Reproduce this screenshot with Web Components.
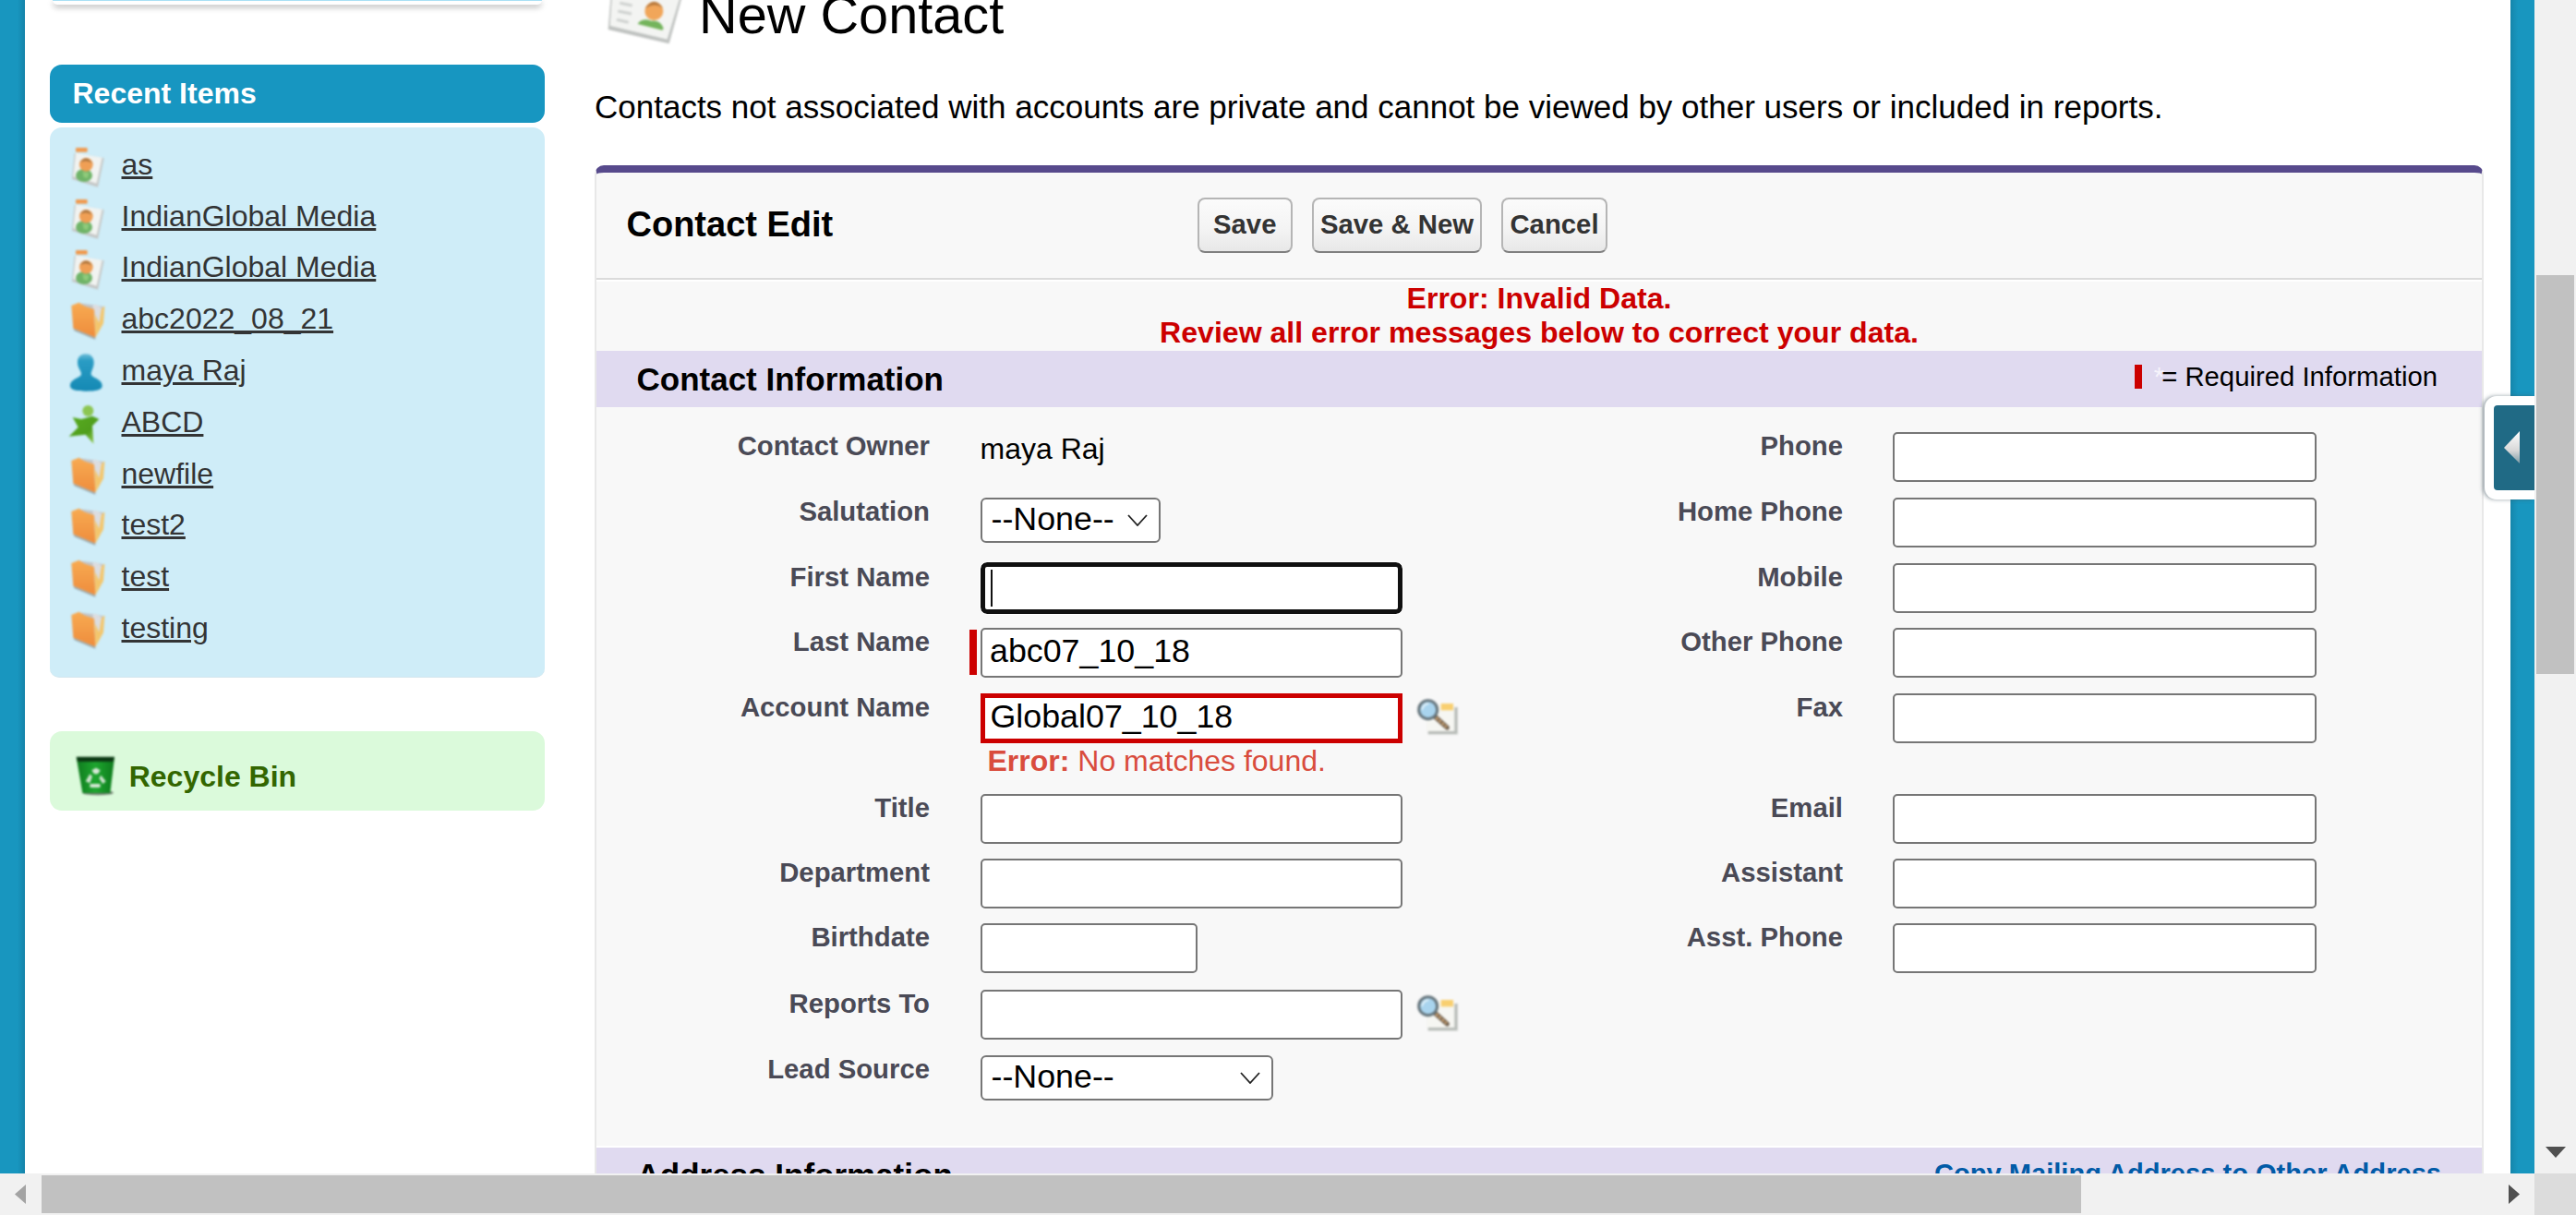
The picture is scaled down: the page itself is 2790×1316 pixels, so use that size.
<!DOCTYPE html>
<html>
<head>
<meta charset="utf-8">
<title>New Contact</title>
<style>
  html, body { margin: 0; padding: 0; height: 100%; overflow: hidden; background: #fff; }
  body { font-family: "Liberation Sans", Arial, sans-serif; }
</style>
</head>
<body>
<sf-app>
  <sf-sidebar slot="side">
    <sf-recent-items>
      <sf-recent-item icon="contact">as</sf-recent-item>
      <sf-recent-item icon="contact">IndianGlobal Media</sf-recent-item>
      <sf-recent-item icon="contact">IndianGlobal Media</sf-recent-item>
      <sf-recent-item icon="folder">abc2022_08_21</sf-recent-item>
      <sf-recent-item icon="user">maya Raj</sf-recent-item>
      <sf-recent-item icon="account">ABCD</sf-recent-item>
      <sf-recent-item icon="folder">newfile</sf-recent-item>
      <sf-recent-item icon="folder">test2</sf-recent-item>
      <sf-recent-item icon="folder">test</sf-recent-item>
      <sf-recent-item icon="folder">testing</sf-recent-item>
    </sf-recent-items>
    <sf-recycle-bin></sf-recycle-bin>
  </sf-sidebar>

  <sf-page-head slot="main"></sf-page-head>

  <sf-edit-card slot="main">
    <sf-section title="Contact Information" required>
      <sf-form-grid>
        <sf-field label="Contact Owner"><sf-text>maya Raj</sf-text></sf-field>
        <sf-field label="Phone" side="right"><sf-input width="459"></sf-input></sf-field>

        <sf-field label="Salutation"><sf-select width="195.5">--None--</sf-select></sf-field>
        <sf-field label="Home Phone" side="right"><sf-input width="459"></sf-input></sf-field>

        <sf-field label="First Name"><sf-input focused></sf-input></sf-field>
        <sf-field label="Mobile" side="right"><sf-input width="459"></sf-input></sf-field>

        <sf-field label="Last Name" required><sf-input>abc07_10_18</sf-input></sf-field>
        <sf-field label="Other Phone" side="right"><sf-input width="459"></sf-input></sf-field>

        <sf-field label="Account Name" lookup error="No matches found."><sf-input invalid>Global07_10_18</sf-input></sf-field>
        <sf-field label="Fax" side="right"><sf-input width="459"></sf-input></sf-field>

        <sf-field label="Title"><sf-input></sf-input></sf-field>
        <sf-field label="Email" side="right"><sf-input width="459"></sf-input></sf-field>

        <sf-field label="Department"><sf-input></sf-input></sf-field>
        <sf-field label="Assistant" side="right"><sf-input width="459"></sf-input></sf-field>

        <sf-field label="Birthdate"><sf-input width="235"></sf-input></sf-field>
        <sf-field label="Asst. Phone" side="right"><sf-input width="459"></sf-input></sf-field>

        <sf-field label="Reports To" lookup><sf-input></sf-input></sf-field>
        <div></div>

        <sf-field label="Lead Source"><sf-select width="317">--None--</sf-select></sf-field>
        <div></div>
      </sf-form-grid>
    </sf-section>
    <sf-section title="Address Information" link="Copy Mailing Address to Other Address"></sf-section>
  </sf-edit-card>
</sf-app>

<script>
const ICONS = {
  contact: `<svg viewBox="45 24 120 144" width="40" height="48">
      <rect x="66" y="30" width="38" height="14" rx="3" fill="#f09a50"/>
      <polygon points="62,48 158,64 138,158 54,132" fill="#c4c7c6"/>
      <polygon points="66,47 152,62 134,146 58,124" fill="#f1f3f1"/>
      <ellipse cx="93" cy="120" rx="27" ry="21" fill="#6fb468"/>
      <circle cx="100" cy="85" r="22" fill="#ef9f55"/>
      <path d="M80 78 Q100 50 120 80 Q100 66 80 78Z" fill="#a9743f"/>
      <path d="M88 108 L110 112 L104 130 L92 126Z" fill="#8fca7a"/>
    </svg>`,
  folder: `<svg viewBox="45 76 120 144" width="40" height="48">
      <defs><linearGradient id="fo" x1="0" y1="0" x2="0" y2="1"><stop offset="0" stop-color="#f8ab52"/><stop offset="1" stop-color="#ee8c3c"/></linearGradient></defs>
      <polygon points="128,108 160,96 156,152 130,198" fill="#f3c66d"/>
      <polygon points="74,86 122,92 156,98 134,126 100,110" fill="#c2c3c6"/>
      <polygon points="120,94 132,90 150,102 142,150 128,120" fill="#dcdde0"/>
      <polygon points="52,94 76,84 96,96 126,106 130,198 58,168" fill="url(#fo)"/>
      <polygon points="58,168 130,198 130,204 62,176" fill="#9aa6a8"/>
    </svg>`,
  user: `<svg viewBox="45 243 120 144" width="40" height="48">
      <defs><linearGradient id="us" x1="0" y1="0" x2="0" y2="1"><stop offset="0" stop-color="#6cbcd8"/><stop offset=".18" stop-color="#2a9cc4"/><stop offset="1" stop-color="#1489b4"/></linearGradient></defs>
      <path d="M72 278 C72 258 84 250 98 250 C114 250 125 260 125 278 C125 296 116 304 116 316 C116 328 152 330 152 354 C152 368 130 371 100 371 C70 371 48 368 48 354 C48 330 84 328 84 316 C84 304 72 296 72 278Z" fill="url(#us)"/>
    </svg>`,
  account: `<svg viewBox="45 411 120 144" width="40" height="48">
      <defs><linearGradient id="ac" x1="0" y1="0" x2="1" y2="1"><stop offset="0" stop-color="#58ac20"/><stop offset=".6" stop-color="#4f9e1c"/><stop offset="1" stop-color="#a6d860"/></linearGradient></defs>
      <circle cx="106" cy="435" r="18" fill="#8cc652"/>
      <path d="M56 456 L84 462 L120 452 L142 462 L120 484 L124 542 L98 512 L44 518 L74 488Z" fill="url(#ac)"/>
    </svg>`,
  bin: `<svg viewBox="60 105 140 145" width="46.7" height="48.3">
      <defs>
        <linearGradient id="bi" x1="0" y1="0" x2="1" y2="0"><stop offset="0" stop-color="#0f7a1e"/><stop offset=".5" stop-color="#1ea62f"/><stop offset="1" stop-color="#0d7a1c"/></linearGradient>
      </defs>
      <ellipse cx="138" cy="233" rx="50" ry="8" fill="#6e7a6e"/>
      <polygon points="68,118 192,118 178,234 88,234" fill="url(#bi)"/>
      <polygon points="68,116 192,116 188,132 72,132" fill="#0c3a14"/>
      <path d="M118 160 L132 152 L146 160 L138 172 L126 172Z" fill="#d7e8d7"/>
      <path d="M98 196 L112 172 L120 180 L112 202Z" fill="#cfe4cf"/>
      <path d="M148 176 L164 196 L154 204 L142 186Z" fill="#cfe4cf"/>
      <rect x="112" y="204" width="34" height="12" rx="4" fill="#d7e8d7"/>
    </svg>`,
  lookup: `<svg viewBox="90 40 150 135" width="50" height="45">
      <rect x="134" y="76" width="96" height="88" fill="#b8bcb8"/>
      <rect x="128" y="70" width="92" height="84" fill="#f6f6f2"/>
      <rect x="176" y="64" width="40" height="22" fill="#f8cf70"/>
      <path d="M158 108 L196 142" stroke="#6b5b4a" stroke-width="15" stroke-linecap="round"/>
      <path d="M160 110 L194 140" stroke="#e0b078" stroke-width="7" stroke-dasharray="8 5"/>
      <circle cx="134" cy="84" r="30" fill="#a9d4ee" stroke="#66757c" stroke-width="9"/>
      <path d="M114 84 Q118 66 136 64" stroke="#e4f3fb" stroke-width="6" fill="none"/>
    </svg>`,
  card: `<svg viewBox="30 0 300 150" width="100" height="50">
      <polygon points="66,-30 296,-10 254,142 56,96" fill="#bfc2c0"/>
      <polygon points="70,-30 290,-10 248,128 62,84" fill="#f3f4f2"/>
      <g stroke="#cfd2d0" stroke-width="9">
        <path d="M94 10 L134 18"/><path d="M88 36 L132 45"/><path d="M84 64 L122 73"/>
      </g>
      <path d="M156 72 Q170 58 196 68 Q226 64 236 92 L232 98 L152 78Z" fill="#74b45c"/>
      <circle cx="205" cy="36" r="30" fill="#f1a65a"/>
      <path d="M176 28 Q204 -16 234 26 Q206 6 176 28Z" fill="#b97a3c"/>
    </svg>`
};

class SfElement extends HTMLElement {
  constructor() {
    super();
    this.attachShadow({ mode: 'open' });
  }

  connectedCallback() {
    this.render();
  }
}

class SfApp extends SfElement {
  render() {
    this.shadowRoot.innerHTML = `
      <style>
        :host {
          display: grid;
          grid-template-columns: 2745px 45px;
          grid-template-rows: 1271px 45px;
          width: 2790px;
          height: 1316px;
          overflow: hidden;
          color: #000;
          font-family: "Liberation Sans", Arial, sans-serif;
        }
        .view {
          position: relative;
          display: flex;
          overflow: hidden;
          background: #fff;
        }
        .edge {
          flex: none;
          width: 27px;
          background: linear-gradient(90deg, #1896bf 0%, #1896bf 70%, #1583a9 100%);
        }
        .edge.right {
          margin-left: 29px;
          background: linear-gradient(90deg, #1586ab 0%, #1896bf 30%, #1896bf 100%);
        }
        .side {
          flex: none;
          width: 536px;
          margin: 0 54px 0 27px;
        }
        .main {
          flex: none;
          width: 2046px;
        }
        .tab {
          position: absolute;
          top: 429px;
          right: 0;
          box-sizing: border-box;
          display: flex;
          width: 54px;
          height: 112px;
          padding: 10px 0 10px 10px;
          background: #fff;
          border-radius: 13px 0 0 13px;
          box-shadow: -2px 0 4px rgba(70, 90, 100, 0.55);
        }
        .tab div {
          flex: 1;
          display: flex;
          align-items: center;
          padding-left: 10px;
          background: #206a85;
          border-radius: 4px 0 0 4px;
        }
        .vbar {
          position: relative;
          background: #f1f1f1;
        }
        .vbar .thumb {
          position: absolute;
          top: 298px;
          left: 2px;
          width: 41px;
          height: 432px;
          background: #c1c1c1;
        }
        .vbar svg {
          position: absolute;
          left: 12px;
          top: 1242px;
        }
        .hbar {
          position: relative;
          background: #f1f1f1;
        }
        .hbar .thumb {
          position: absolute;
          top: 2px;
          left: 45px;
          width: 2209px;
          height: 41px;
          background: #c1c1c1;
        }
        .hbar svg {
          position: absolute;
          top: 12px;
        }
        .corner {
          background: #dcdcdc;
        }
      </style>
      <div class="view">
        <div class="edge"></div>
        <div class="side"><slot name="side"></slot></div>
        <div class="main"><slot name="main"></slot></div>
        <div class="edge right"></div>
        <div class="tab"><div>
          <svg width="20" height="36" viewBox="0 0 20 36">
            <defs><linearGradient id="tri" x1="0" y1="0" x2="0" y2="1"><stop offset="0" stop-color="#fff"/><stop offset=".6" stop-color="#d8d8d8"/><stop offset="1" stop-color="#7d9aa6"/></linearGradient></defs>
            <polygon points="18,0 18,35 1,18" fill="url(#tri)"/>
          </svg>
        </div></div>
      </div>
      <div class="vbar">
        <div class="thumb"></div>
        <svg width="22" height="12" viewBox="0 0 22 12"><polygon points="0,0 22,0 11,12" fill="#505050"/></svg>
      </div>
      <div class="hbar">
        <div class="thumb"></div>
        <svg style="left:16px" width="12" height="21" viewBox="0 0 12 21"><polygon points="12,0 12,21 0,10.5" fill="#a3a3a3"/></svg>
        <svg style="left:2717px" width="12" height="21" viewBox="0 0 12 21"><polygon points="0,0 0,21 12,10.5" fill="#505050"/></svg>
      </div>
      <div class="corner"></div>
    `;
  }
}

class SfIcon extends SfElement {
  render() {
    this.shadowRoot.innerHTML = `
      <style>
        :host { display: block; flex: none; line-height: 0; }
        svg { display: block; overflow: visible; filter: blur(0.8px); }
      </style>
      ${ICONS[this.getAttribute('name')] || ''}
    `;
  }
}

class SfSidebar extends SfElement {
  render() {
    this.shadowRoot.innerHTML = `
      <style>
        :host { display: block; }
        .prev {
          box-sizing: border-box;
          height: 5px;
          margin: 0 3px 65px;
          background: #fff;
          border-top: 1.5px solid #a8e0f5;
          border-radius: 0 0 12px 12px;
          box-shadow: 0 3px 6px rgba(0, 0, 0, 0.28);
        }
      </style>
      <div class="prev"></div>
      <slot></slot>
    `;
  }
}

class SfRecentItems extends SfElement {
  render() {
    this.shadowRoot.innerHTML = `
      <style>
        :host { display: block; font-size: 32px; }
        h2 {
          box-sizing: border-box;
          height: 63px;
          margin: 0 0 5px;
          padding-left: 24.5px;
          background: #1796c1;
          border-radius: 13px;
          color: #fff;
          font-size: 32px;
          font-weight: 700;
          line-height: 63px;
        }
        .list {
          box-sizing: border-box;
          height: 596px;
          padding: 12.5px 0 0 21px;
          background: #cfedf8;
          border-bottom: 1px solid #d3e6ee;
          border-radius: 13px 13px 10px 10px;
        }
      </style>
      <h2>Recent Items</h2>
      <div class="list"><slot></slot></div>
    `;
  }
}

class SfRecentItem extends SfElement {
  render() {
    this.shadowRoot.innerHTML = `
      <style>
        :host {
          display: flex;
          align-items: center;
          height: 55.8px;
          color: #333435;
        }
        sf-icon { margin-top: 7px; margin-right: 16.5px; }
        span {
          text-decoration: underline;
          text-decoration-thickness: 3px;
          white-space: nowrap;
        }
      </style>
      <sf-icon name="${this.getAttribute('icon')}"></sf-icon>
      <span><slot></slot></span>
    `;
  }
}

class SfRecycleBin extends SfElement {
  render() {
    this.shadowRoot.innerHTML = `
      <style>
        :host {
          display: flex;
          align-items: center;
          box-sizing: border-box;
          height: 86px;
          margin-top: 58px;
          padding: 10px 0 0 26px;
          background: #dbfadb;
          border-radius: 13px;
          color: #336600;
          font-size: 32px;
          font-weight: 700;
        }
        sf-icon { margin-right: 13px; }
        span { margin-top: 2px; }
      </style>
      <sf-icon name="bin"></sf-icon>
      <span>Recycle Bin</span>
    `;
  }
}

class SfPageHead extends SfElement {
  render() {
    this.shadowRoot.innerHTML = `
      <style>
        :host { display: block; }
        .title { display: flex; align-items: flex-start; height: 50px; padding-left: 6px; }
        h1 {
          margin: 0 0 0 7px;
          font-size: 57.7px;
          font-weight: 400;
          line-height: 32px;
          white-space: nowrap;
        }
        p {
          margin: 46px 0 43px;
          font-size: 35px;
          line-height: 40px;
          white-space: nowrap;
        }
      </style>
      <div class="title"><sf-icon name="card"></sf-icon><h1>New Contact</h1></div>
      <p>Contacts not associated with accounts are private and cannot be viewed by other users or included in reports.</p>
    `;
  }
}

class SfEditCard extends SfElement {
  render() {
    this.shadowRoot.innerHTML = `
      <style>
        :host {
          display: block;
          box-sizing: border-box;
          background: #f8f8f8;
          border-top: 8px solid #574a8c;
          border-left: 2.5px solid #e8e8e8;
          border-right: 2px solid #e8e8e8;
          border-radius: 10px 10px 0 0;
        }
        header {
          display: flex;
          align-items: center;
          box-sizing: border-box;
          height: 114px;
        }
        h2 {
          box-sizing: border-box;
          width: 650.5px;
          margin: 0 0 2px;
          padding-left: 32.5px;
          font-size: 38px;
          font-weight: 700;
        }
        .actions { display: flex; gap: 21px; }
        .rule {
          height: 2px;
          background: #dbdbdb;
          border-bottom: 2px solid #fff;
        }
        .errors {
          height: 75px;
          color: #cc0000;
          font-size: 32.1px;
          font-weight: 700;
          line-height: 37px;
          text-align: center;
        }
      </style>
      <header>
        <h2>Contact Edit</h2>
        <div class="actions">
          <sf-button width="103.5">Save</sf-button>
          <sf-button width="184">Save &amp; New</sf-button>
          <sf-button width="115">Cancel</sf-button>
        </div>
      </header>
      <div class="rule"></div>
      <div class="errors">Error: Invalid Data.<br>Review all error messages below to correct your data.</div>
      <slot></slot>
    `;
  }
}

class SfButton extends SfElement {
  render() {
    this.shadowRoot.innerHTML = `
      <style>
        :host {
          display: flex;
          align-items: center;
          justify-content: center;
          box-sizing: border-box;
          width: ${this.getAttribute('width')}px;
          height: 60px;
          padding-bottom: 2px;
          background: linear-gradient(180deg, #fbfbfb 0%, #f4f4f4 55%, #e8e8e8 100%);
          border: 2px solid #b5b5b5;
          border-bottom-color: #7f7f7f;
          border-radius: 8px;
          color: #333;
          font-size: 29.3px;
          font-weight: 700;
          white-space: nowrap;
        }
      </style>
      <slot></slot>
    `;
  }
}

class SfSection extends SfElement {
  render() {
    const link = this.getAttribute('link');
    const legend = this.hasAttribute('required')
      ? `<div class="legend"><i></i><b>*</b><span>= Required Information</span></div>`
      : '';
    this.shadowRoot.innerHTML = `
      <style>
        :host { display: block; }
        .bar {
          display: flex;
          align-items: center;
          justify-content: space-between;
          box-sizing: border-box;
          height: 61px;
          padding: 0 44px 0 43.5px;
          background: #e0daf0;
        }
        h3 { margin: 0; font-size: 35px; font-weight: 700; }
        .legend {
          display: flex;
          align-items: center;
          margin: 0 4px 6px 0;
          font-size: 29.3px;
          white-space: nowrap;
        }
        .legend i { width: 8px; height: 26px; margin-right: 13px; background: #cc0000; }
        .legend b { margin-right: -3px; color: #f6f3fb; font-weight: 400; }
        a { margin-bottom: 4px; color: #015ba7; font-size: 29.1px; font-weight: 700; white-space: nowrap; }
      </style>
      <div class="bar">
        <h3>${this.getAttribute('title')}</h3>
        ${legend}
        ${link ? `<a>${link}</a>` : ''}
      </div>
      <slot></slot>
    `;
  }
}

class SfFormGrid extends SfElement {
  render() {
    this.shadowRoot.innerHTML = `
      <style>
        :host {
          display: grid;
          grid-template-columns: 1015px 1fr;
          grid-template-rows: repeat(4, 70.75px) 108.5px 70.4px 70.4px 71.5px 71px 70.95px;
          padding: 27px 0 27px;
          border-bottom: 2px solid #fff;
        }
      </style>
      <slot></slot>
    `;
  }
}

class SfField extends SfElement {
  render() {
    const error = this.getAttribute('error');
    const lookup = this.hasAttribute('lookup') ? '<sf-icon name="lookup"></sf-icon>' : '';
    this.shadowRoot.innerHTML = `
      <style>
        :host {
          display: grid;
          grid-template-columns: 361px 1fr;
          column-gap: 54.5px;
          align-items: start;
        }
        :host([side="right"]) { grid-template-columns: 335px 1fr; column-gap: 53.5px; }
        label {
          color: #4a4a56;
          font-size: 29.3px;
          font-weight: 700;
          line-height: 30px;
          text-align: right;
          white-space: nowrap;
        }
        .control { position: relative; }
        .row { display: flex; align-items: flex-start; }
        sf-icon { margin: 3px 0 0 13px; }
        :host([required]) .control::before {
          content: "";
          position: absolute;
          top: 2px;
          left: -12px;
          width: 8px;
          height: 49px;
          background: #cc0000;
        }
        .error {
          padding-left: 8px;
          color: #d94c3d;
          font-size: 32px;
          line-height: 38px;
          white-space: nowrap;
        }
      </style>
      <label>${this.getAttribute('label')}</label>
      <div class="control">
        <div class="row"><slot></slot>${lookup}</div>
        ${error ? `<div class="error"><b>Error:</b> ${error}</div>` : ''}
      </div>
    `;
  }
}

class SfText extends SfElement {
  render() {
    this.shadowRoot.innerHTML = `
      <style>:host { display: block; font-size: 32px; line-height: 36px; white-space: nowrap; }</style>
      <slot></slot>
    `;
  }
}

class SfInput extends SfElement {
  render() {
    const width = this.getAttribute('width') || 457;
    const caret = this.hasAttribute('focused') ? '<i></i>' : '';
    this.shadowRoot.innerHTML = `
      <style>
        :host {
          display: flex;
          align-items: center;
          box-sizing: border-box;
          width: ${width}px;
          height: 54px;
          padding: 0 8px 4px 8.5px;
          background: #fff;
          border: 2.5px solid #767676;
          border-radius: 5px;
          font-size: 35.8px;
          white-space: nowrap;
        }
        :host([focused]) {
          margin-top: -1px;
          height: 56px;
          border: 5px solid #101010;
          border-radius: 7px;
          outline: 1.5px solid #fff;
          padding: 0 6px;
        }
        :host([invalid]) {
          border: 5px solid #cc0000;
          border-radius: 0;
          padding-left: 6px;
        }
        i { display: block; width: 2px; height: 40px; background: #111; }
      </style>
      ${caret}<slot></slot>
    `;
  }
}

class SfSelect extends SfElement {
  render() {
    this.shadowRoot.innerHTML = `
      <style>
        :host {
          display: flex;
          align-items: center;
          justify-content: space-between;
          box-sizing: border-box;
          width: ${this.getAttribute('width')}px;
          height: 49px;
          padding: 0 12px 1px 10px;
          background: #fff;
          border: 2.5px solid #767676;
          border-radius: 6px;
          font-size: 35.8px;
          white-space: nowrap;
        }
        svg { flex: none; margin-top: 2px; }
      </style>
      <slot></slot>
      <svg width="22" height="13" viewBox="0 0 22 13"><path d="M1 1 L11 12 L21 1" fill="none" stroke="#222" stroke-width="1.8"/></svg>
    `;
  }
}

customElements.define('sf-app', SfApp);
customElements.define('sf-icon', SfIcon);
customElements.define('sf-sidebar', SfSidebar);
customElements.define('sf-recent-items', SfRecentItems);
customElements.define('sf-recent-item', SfRecentItem);
customElements.define('sf-recycle-bin', SfRecycleBin);
customElements.define('sf-page-head', SfPageHead);
customElements.define('sf-edit-card', SfEditCard);
customElements.define('sf-button', SfButton);
customElements.define('sf-section', SfSection);
customElements.define('sf-form-grid', SfFormGrid);
customElements.define('sf-field', SfField);
customElements.define('sf-text', SfText);
customElements.define('sf-input', SfInput);
customElements.define('sf-select', SfSelect);
</script>
</body>
</html>
